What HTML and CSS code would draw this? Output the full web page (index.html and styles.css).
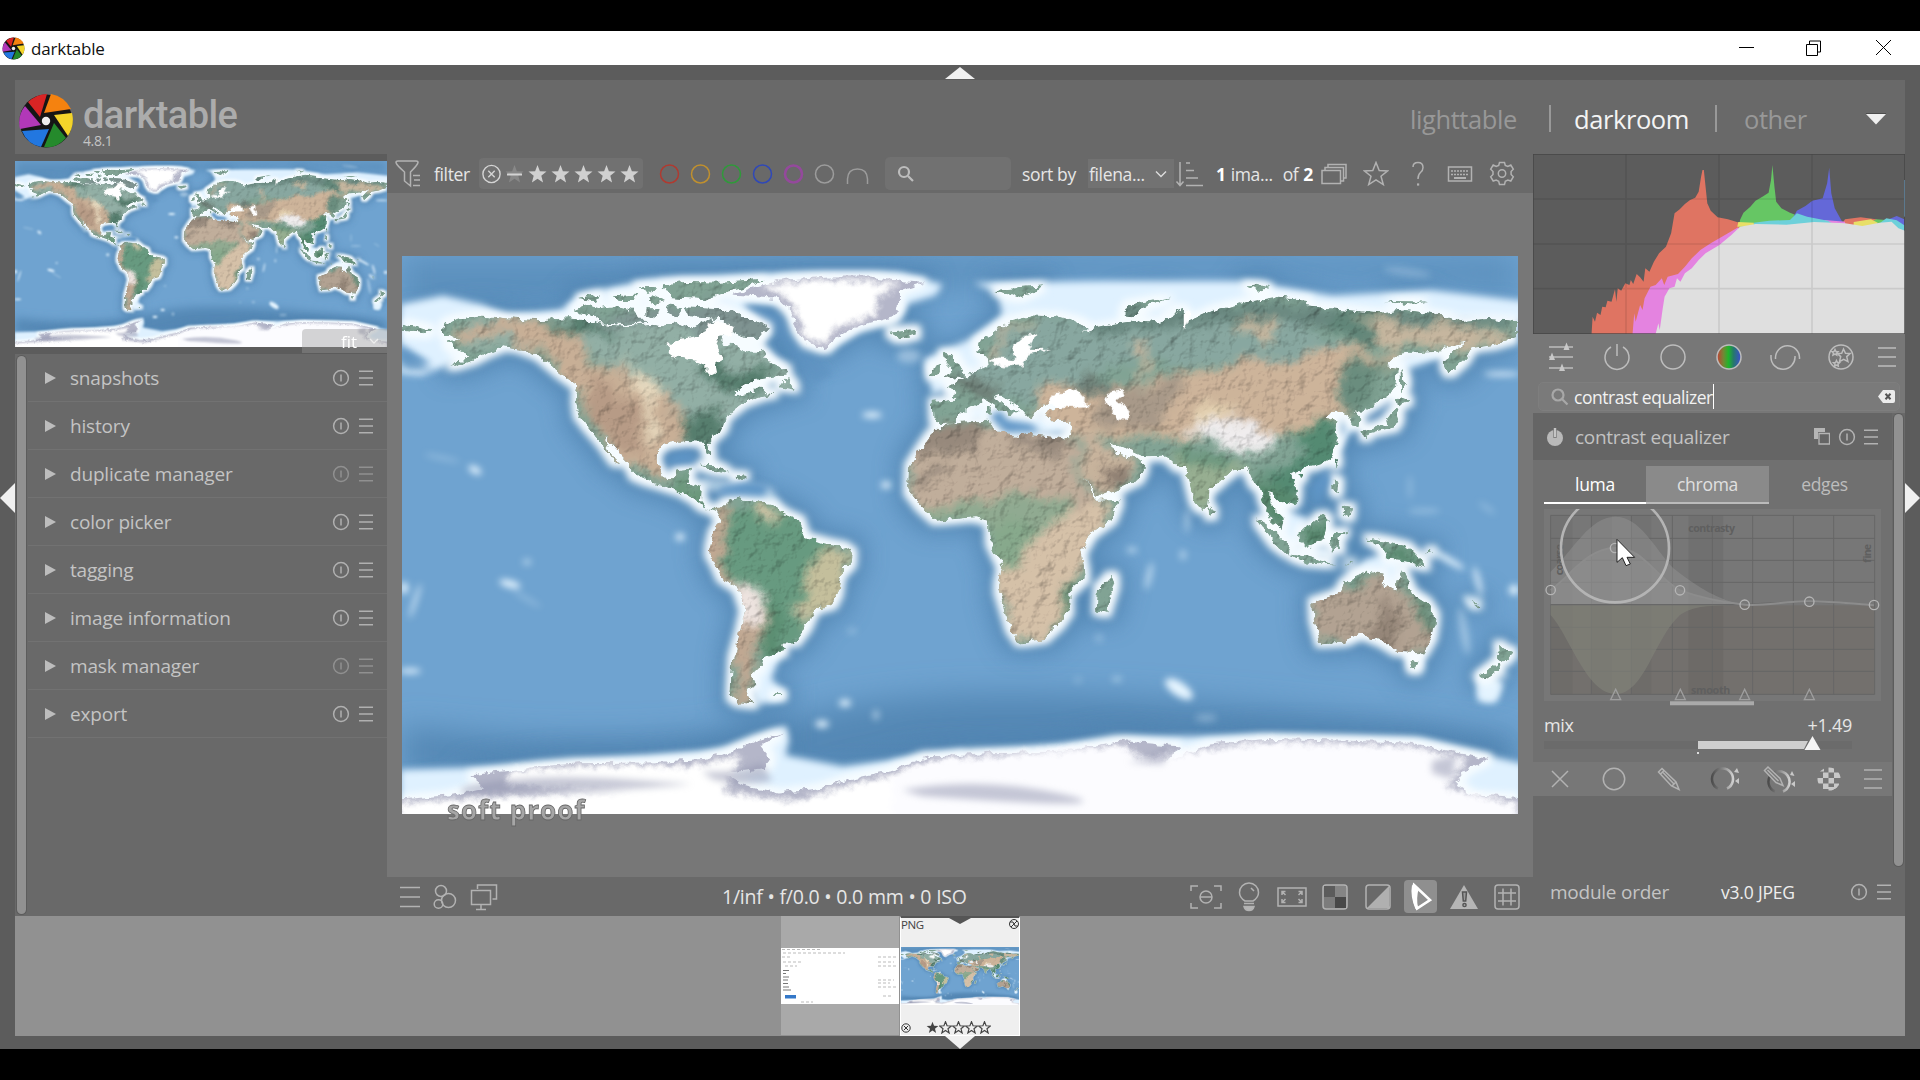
FILE: index.html
```html
<!DOCTYPE html>
<html lang="en">
<head>
<meta charset="utf-8">
<title>darktable</title>
<link rel="stylesheet" href="styles.css">
</head>
<body>
<svg class="defs" width="0" height="0" aria-hidden="true">
<defs>
  <filter id="rough" x="0" y="0" width="1116" height="558" filterUnits="userSpaceOnUse" color-interpolation-filters="sRGB">
    <feTurbulence type="fractalNoise" baseFrequency=".11" numOctaves="3" seed="4" result="n"/>
    <feDisplacementMap in="SourceGraphic" in2="n" scale="9" xChannelSelector="R" yChannelSelector="G"/>
  </filter>
  <filter id="relief" x="0" y="0" width="1116" height="558" filterUnits="userSpaceOnUse" color-interpolation-filters="sRGB">
    <feTurbulence type="fractalNoise" baseFrequency=".11" numOctaves="3" seed="4" result="n"/>
    <feDisplacementMap in="SourceGraphic" in2="n" scale="9" xChannelSelector="R" yChannelSelector="G" result="d0"/>
    <feColorMatrix in="d0" type="saturate" values=".82" result="d"/>
    <feTurbulence type="fractalNoise" baseFrequency=".07" numOctaves="5" seed="11" result="t"/>
    <feDiffuseLighting in="t" surfaceScale="2" diffuseConstant="1.22" lighting-color="#ffffff" result="l"><feDistantLight azimuth="225" elevation="55"/></feDiffuseLighting>
    <feComposite in="d" in2="l" operator="arithmetic" k1=".7" k2=".3" result="c"/>
    <feComposite in="c" in2="d" operator="in"/>
  </filter>
  <filter id="patch" x="0" y="0" width="1116" height="558" filterUnits="userSpaceOnUse" color-interpolation-filters="sRGB">
    <feTurbulence type="fractalNoise" baseFrequency=".035" numOctaves="4" seed="7" result="n"/>
    <feDisplacementMap in="SourceGraphic" in2="n" scale="34" xChannelSelector="R" yChannelSelector="G"/><feGaussianBlur stdDeviation="4.500"/>
  </filter>
  <filter id="deep" x="0" y="0" width="1116" height="558" filterUnits="userSpaceOnUse"><feMorphology operator="dilate" radius="13"/><feGaussianBlur stdDeviation="11"/></filter>
  <filter id="glow" x="0" y="0" width="1116" height="558" filterUnits="userSpaceOnUse"><feMorphology operator="dilate" radius="4.500"/><feGaussianBlur stdDeviation="3.800"/></filter>
  <filter id="b2" x="-50%" y="-50%" width="200%" height="200%"><feGaussianBlur stdDeviation="3.500"/></filter>
  <filter id="b5" x="-50%" y="-50%" width="200%" height="200%"><feGaussianBlur stdDeviation="9"/></filter>
  <filter id="b14" x="-50%" y="-50%" width="200%" height="200%"><feGaussianBlur stdDeviation="15"/></filter>
  <path id="west" transform="translate(-2 -6) scale(.3571 .3635)" d="M125 205L160 190 225 180 300 188 390 193 470 188 520 193 580 205 640 210 700 203 740 208 780 198 820 215 870 190 930 215 900 240 900 258 940 262 975 280 1000 280 1010 275 1040 310 1085 330 1080 345 1040 352 985 362 955 380 935 400 990 390 1005 375 1020 390 1050 395 1010 402 960 420 915 455 905 490 870 520 862 530 873 565 862 560 850 530 800 528 740 535 722 550 722 590 735 625 765 628 780 605 815 602 805 640 845 655 843 690 860 712 895 712 920 690 945 682 965 690 1040 698 1075 725 1120 745 1135 790 1190 805 1240 815 1268 835 1265 860 1235 890 1228 940 1210 975 1160 990 1140 1035 1105 1080 1070 1080 1075 1105 1020 1120 1010 1150 985 1165 995 1190 970 1215 990 1250 950 1245 925 1225 930 1130 950 1060 965 990 945 930 900 900 880 855 865 830 875 785 900 745 885 720 850 708 825 685 790 665 735 648 690 635 655 620 640 585 600 545 575 515 590 560 618 588 600 580 565 530 525 485 498 450 492 410 500 375 450 340 390 290 340 272 290 265 240 285 200 305 140 322 180 300 200 290 150 272 130 255 165 245 120 230ZM835 590L880 592 920 612 890 608ZM935 618L970 622 945 632ZM1065 375L1085 350 1108 382ZM5 200L85 218 70 232 5 225ZM485 165L520 150 555 160 600 155 660 170 690 200 640 205 560 198 530 175ZM500 135L560 122 540 140ZM595 125L670 120 660 140 610 140ZM665 100L720 100 700 120ZM690 160L730 160 725 185 690 178ZM735 95L800 88 900 90 1020 82 960 105 900 118 850 135 760 130ZM750 150L790 155 770 185 745 175ZM800 155L900 160 970 185 1030 215 1000 250 940 230 900 190 810 185ZM700 125L740 140 710 148ZM1370 225L1440 218 1448 232 1400 245ZM1045 1222h25v5h-25Z"/>
  <path id="east" transform="translate(498 -6) scale(.4082 .3635)" d="M80 418L135 412 138 390 115 378 135 366 160 345 192 335 215 320 212 290 190 282 188 255 230 225 265 197 330 180 380 182 430 195 460 212 440 235 410 225 440 230 480 215 530 205 600 195 640 200 660 180 690 160 702 175 700 200 770 165 840 145 920 130 1000 140 1000 155 1100 165 1180 175 1240 165 1330 180 1370 195 1440 190 1514 195 1514 240 1450 262 1400 270 1385 300 1345 340 1332 310 1360 275 1385 255 1340 265 1330 275 1230 285 1190 320 1220 325 1215 380 1180 410 1130 445 1110 440 1130 465 1128 485 1110 480 1090 445 1050 450 1045 460 1070 475 1062 500 1075 520 1060 565 1030 590 990 600 955 615 975 660 970 690 950 705 905 665 905 700 940 740 935 770 910 745 890 690 882 655 865 640 850 600 825 600 800 620 770 650 758 660 755 700 740 715 720 690 700 600 685 600 655 568 600 570 570 555 515 530 530 560 575 570 600 595 585 630 540 655 482 680 455 630 415 560 400 530 415 500 418 470 370 470 355 455 365 440 400 430 440 428 465 430 430 405 440 390 400 395 380 400 360 425 345 440 330 440 320 465 300 440 250 400 235 405 270 440 295 445 270 460 235 430 205 410 175 430 150 450 130 475 105 475 82 465ZM105 478L160 472 220 470 235 500 290 515 310 508 400 520 415 560 450 620 480 690 538 688 520 740 470 780 445 830 455 900 415 940 415 990 390 1030 350 1070 295 1080 270 1040 240 930 250 870 220 800 218 745 180 735 90 745 50 705 20 660 22 600 50 550 75 510ZM520 893L528 915 505 998 482 992 485 935ZM1010 970L1075 945 1090 915 1115 900 1145 885 1185 890 1180 915 1215 935 1230 880 1255 945 1290 970 1312 1010 1305 1060 1280 1110 1220 1105 1185 1080 1130 1055 1085 1078 1030 1082 1012 1010ZM1248 1130L1273 1135 1265 1157 1253 1150ZM1465 1083L1480 1100 1502 1105 1480 1132 1468 1125ZM1465 1133L1472 1150 1432 1182 1418 1175ZM872 738L900 757 955 815 950 835 915 805ZM950 838L1000 843 1065 865 1000 860ZM978 775L1010 755 1035 728 1050 745 1040 800 1000 817 980 803ZM1055 785L1098 772 1070 792 1082 828 1067 812 1058 832ZM1140 790L1190 800 1240 815 1262 840 1292 872 1250 858 1200 852 1175 812ZM1060 628L1077 640 1072 672 1062 655ZM1085 705L1107 710 1102 735 1085 725ZM1215 400L1250 415 1220 427ZM1218 435L1225 460 1210 488 1150 502 1140 518 1135 500 1190 475ZM1226 322L1242 365 1228 395ZM105 282L132 292 160 345 112 355 125 325 108 305ZM73 325L100 313 100 340 76 347ZM233 110L350 100 290 132ZM545 180L560 150 668 130 600 155 570 182ZM756 703L770 725 757 734ZM845 98L870 95 905 105 880 112ZM1190 140L1290 142 1250 150ZM1065 570l9 8-7 18zM975 615l15 2-10 14zM213 432h9v16h-9zM1395 960l22 15-3 3zM1105 858l-15 12 20-10zM1290 835l15-12-3 10z"/>
  <g id="ice"><path transform="translate(-2 -6) scale(.3571 .3635)" d="M930 125L1000 100 1080 82 1200 73 1310 73 1400 85 1465 90 1400 110 1400 150 1380 185 1320 200 1270 212 1215 245 1190 272 1140 255 1110 215 1095 170 1060 135 1000 130ZM0 1512L140 1500 240 1478 200 1445 400 1420 500 1412 700 1410 850 1400 930 1380 1000 1350 1070 1328 1010 1365 1040 1400 1020 1425 900 1440 960 1470 1060 1495 1180 1480 1260 1455 1380 1430 1480 1392 1580 1395V1590H0Z"/><path transform="translate(498 -6) scale(.4082 .3635)" d="M-20 1435L60 1395 200 1385 400 1380 540 1350 680 1365 650 1410 760 1360 900 1345 1100 1350 1250 1355 1440 1400 1385 1430 1360 1470 1400 1500 1530 1508V1590H-20Z"/></g>
  <g id="shelf"><path transform="translate(-2 -6) scale(.3571 .3635)" d="M0 150L120 125 230 150 300 180 450 165 500 125 700 80 1100 62 1400 62 1520 95 1500 125 1420 150 1400 190 1300 215 1190 280 1120 250 1080 150 960 145 1040 220 1000 260 1080 320 960 400 880 300 600 220 150 250 180 300 60 345 0 340 0 310 90 315 0 260ZM980 1190L1000 1120 1080 1080 1040 1180 1080 1215 1070 1240 1000 1250ZM0 1430L300 1420 900 1375 1080 1310 1090 1350 1080 1390 1240 1420 1400 1400 1580 1375V1560H0Z"/><path transform="translate(498 -6) scale(.4082 .3635)" d="M180 90L500 85 850 85 1060 125 1300 110 1530 140V200L900 170 600 230 200 330 80 400 60 300 180 240 250 180 240 120ZM1190 320L1230 290 1360 260 1340 290 1240 330 1240 380ZM1040 440L1130 460 1080 540 1060 590 1045 550ZM900 670L960 720 1000 740 970 830 930 800ZM950 820L1050 820 1060 850 960 840ZM1090 900L1140 850 1200 830 1230 860 1230 910 1200 930ZM1230 1090h50v60h-30zM100 475L220 470 290 510 410 500 415 465 300 445 190 420ZM60 310h120v80h-60zM1420 1170L1480 1190 1460 1245 1415 1240ZM-20 1400L300 1370 560 1340 900 1335 1280 1345 1440 1390 1530 1415V1560H-20Z"/></g>
  <clipPath id="landclip"><use href="#west"/><use href="#east"/></clipPath>
  <symbol id="world" viewBox="0 0 1116 558" preserveAspectRatio="none">
    <rect width="1116" height="558" fill="#6fa3d0"/>
    <path d="M0 0H1116V40Q900 10 560 30T0 60Z" fill="#5c90bd" filter="url(#b14)"/>
    <path d="M0 470Q250 500 420 455T1116 480V520H0Z" fill="#5588b5" filter="url(#b14)"/>
    <g filter="url(#deep)" fill="#5083b0" opacity=".78"><use href="#west"/><use href="#east"/><use href="#ice"/></g>
    <g fill="#dff1ff" filter="url(#b2)"><use href="#shelf"/></g>
    <g fill="#e6f5ff" filter="url(#b2)">
      <ellipse cx="73" cy="214" rx="7" ry="3.500" transform="rotate(30 73 214)"/><ellipse cx="40" cy="202" rx="18" ry="1.500" opacity=".4" transform="rotate(12 40 202)"/>
      <ellipse cx="278" cy="281" rx="4.500" ry="3.500"/><ellipse cx="108" cy="328" rx="11" ry="3.500" transform="rotate(15 108 328)"/><ellipse cx="125" cy="343" rx="16" ry="2" opacity=".3" transform="rotate(30 125 343)"/>
      <ellipse cx="13" cy="345" rx="2" ry="18" opacity=".8" transform="rotate(18 13 345)"/><ellipse cx="2" cy="332" rx="4" ry="6"/><ellipse cx="8" cy="415" rx="11" ry="2.500"/><ellipse cx="125" cy="306" rx="4" ry="3" opacity=".6"/>
      <ellipse cx="470" cy="159" rx="10" ry="3"/><ellipse cx="484" cy="229" rx="5" ry="3.500"/><ellipse cx="507" cy="100" rx="12" ry="7" opacity=".4"/>
      <ellipse cx="443" cy="447" rx="6" ry="3.500"/><ellipse cx="420" cy="468" rx="7" ry="3.500"/><ellipse cx="474" cy="459" rx="3" ry="5" opacity=".6"/><ellipse cx="450" cy="375" rx="5" ry="3" opacity=".3"/>
      <ellipse cx="777" cy="433" rx="16" ry="7" transform="rotate(34 777 433)"/><ellipse cx="804" cy="462" rx="11" ry="4" opacity=".3"/><ellipse cx="715" cy="423" rx="5" ry="2.500" opacity=".5"/><ellipse cx="676" cy="424" rx="4" ry="2.500" opacity=".3"/>
      <ellipse cx="730" cy="294" rx="5" ry="2.500" opacity=".7"/><ellipse cx="747" cy="320" rx="3" ry="14" opacity=".6" transform="rotate(12 747 320)"/><ellipse cx="785" cy="265" rx="2" ry="12" opacity=".6"/><ellipse cx="781" cy="299" rx="3" ry="5" opacity=".6"/><ellipse cx="697" cy="382" rx="4" ry="4" opacity=".3"/>
      <ellipse cx="1008" cy="231" rx="2" ry="12" opacity=".3"/><ellipse cx="1022" cy="255" rx="16" ry="2" opacity=".4"/><ellipse cx="1085" cy="252" rx="10" ry="2" opacity=".3" transform="rotate(35 1085 252)"/>
      <ellipse cx="1045" cy="303" rx="20" ry="3" transform="rotate(30 1045 303)"/><ellipse cx="1076" cy="325" rx="3" ry="15" opacity=".8" transform="rotate(-15 1076 325)"/><ellipse cx="1068" cy="346" rx="9" ry="2.500" transform="rotate(40 1068 346)"/><ellipse cx="1062" cy="375" rx="4" ry="24" opacity=".4" transform="rotate(-10 1062 375)"/>
      <ellipse cx="1112" cy="334" rx="5" ry="5"/><ellipse cx="1086" cy="433" rx="11" ry="13" opacity=".8"/><ellipse cx="1100" cy="118" rx="18" ry="2"/><ellipse cx="1005" cy="16" rx="24" ry="4" opacity=".25" transform="rotate(8 1005 16)"/><ellipse cx="1088" cy="420" rx="20" ry="5" opacity=".4"/>
      <path d="M300 222l40 4 30 6 8 18-22 0-20-12-36-4z" opacity=".6"/>
    </g>
    <path d="M8 98q-4 8 28 18l-34-2zM0 92l26 16-26 4zM342 50q18-6 40 12l10 22q20 12 40 34l-20 10-36-50zM930 160q25-12 14 12t-22-2z" fill="#5f93c1" filter="url(#b2)" opacity=".8"/>
    <g filter="url(#glow)" fill="#f6fcff"><use href="#west"/><use href="#east"/><use href="#ice"/></g>
    <path d="M262 206q10-12 28-10l4 10-22 2zM318 232q30-10 48-2l-4 10-46-2zM587 160l12-6 6 10 25 4 8 8-34 0zM910 230l14-16 5 10-15 26z" fill="#5f95c6" filter="url(#b2)"/>
    <g filter="url(#relief)">
      <g clip-path="url(#landclip)">
        <rect width="1116" height="558" fill="#7fa897"/>
        <g filter="url(#patch)">
          <rect width="1116" height="558" fill="#7ba593"/>
          <path d="M60 60L330 55 420 110 330 190 250 200 240 130 170 90 60 95Z" fill="#8db0a4"/>
          <path d="M245 165L325 145 310 190 250 200ZM130 65l60-4 40 16-80-2zM320 128l60-20-20 20-30 12zM290 95l60 25-40 8z" fill="#4f7f6c"/>
          <path d="M180 60L420 40 390 90 300 80Z" fill="#7b9492"/>
          <path d="M60 66l80-2 38 15 8 28 40 10 42 18 15 28-10 60-45-10-60-80-20-35-50-18-50 8z" fill="#cdae90"/>
          <path d="M225 105l30 25 3 40-6 40-10-60z" fill="#ead9b8"/>
          <path d="M180 118l40 22 20 20-5 40-50-40z" fill="#bc9a80"/>
          <path d="M290 220h30v30h-50z" fill="#649a78"/>
          <path d="M315 250l70 0 40 40 20 10 5 30-60 60-55-30-25-60z" fill="#5f9d7d"/>
          <path d="M395 320l30-22 25-5-4 55-40 14z" fill="#c5bf95"/>
          <path d="M355 255h22l-5 12-12 4zM395 355h18v14h-14z" fill="#d6c5a0"/>
          <path d="M375 330l10 70-30 5 5-50z" fill="#52906e"/>
          <path d="M320 247l16 0-16 40-4 25 36 20 10 30-11 40-2 40-21 10 5-100-40-55z" fill="#c4a78d"/>
          <path d="M330 322l28 12-4 35-14-3z" fill="#efe3de"/>
          <path d="M550 130L600 70 720 60 900 60 960 100 700 110 650 150Z" fill="#83a9a0"/>
          <path d="M680 50L1000 50 1116 60 1060 75 900 65 700 75Z" fill="#64897f"/>
          <path d="M575 100l40-30 25-6-16 10-40 24zM738 84l8 0-2 40-6-4z" fill="#c9b498"/>
          <path d="M930 52l50 0 0 30-20 20-30-40z" fill="#5b8878"/>
          <path d="M835 65l40-4-5 25-35-10zM955 66l160 4-50 26-80-4z" fill="#c9b699"/>
          <path d="M650 125h90l120-22 100-12 40 10-50 60-60 20-80 5-130-5-60-20z" fill="#d2b394"/>
          <path d="M695 135l90-15-30 55-60-5z" fill="#ab9985"/>
          <path d="M690 112l22 16-18 14-20-8zM540 120l60 0-10 20-40-5z" fill="#6b7f75"/>
          <path d="M920 160l20 35-15 30-50 15-10-25 40-20-20-20z" fill="#4b8d70"/>
          <path d="M945 105l45 0-25 45-35 0z" fill="#648f7d"/>
          <path d="M500 170l160 0 30 85-60 5-125-10z" fill="#c4ad96"/>
          <path d="M500 172l90-6-10 26-70 10zM605 178l60 0-10 26zM508 220l40-6-25 20z" fill="#998979"/>
          <path d="M505 252l80-12 80 0 10 25-30 5-150 0z" fill="#8cac8d"/>
          <path d="M590 270h50v36l-26 14-24-14z" fill="#82ab88"/>
          <path d="M595 312l50-42 30-20 35 5-30 60-35 75-40-5z" fill="#d9c0a2"/>
          <path d="M662 330l22-14-5 30-15 36-8-10z" fill="#659375"/>
          <path d="M668 172l60 30 15 15-50 28z" fill="#cbb297"/>
          <path d="M700 205l35 10-10 15-25-4zM770 190l12 18-10-2z" fill="#917e6e"/>
          <path d="M770 195l80 20-20 10-30 40-20-30z" fill="#93b08c"/>
          <path d="M850 215l50 35-20 30-20-20zM965 285l60 20-50 5zM890 270l50-10-30 40zM860 280l40 30-20 4z" fill="#4f8c6b"/>
          <path d="M775 190l60 16-8 8-50-12z" fill="#64987a"/>
          <path d="M790 168l60 0 30 14-10 12-30 3-40-12z" fill="#f0edee"/>
          <path d="M795 152h45l-20 12-25 4z" fill="#e8d2aa"/>
          <path d="M905 330l90-10 40 60-30 30-90-25z" fill="#b5a28e"/>
          <path d="M980 345l20 15-15 40-20-10z" fill="#978574"/>
          <path d="M940 315l30 0-10 8zM1005 310l14 20 16 40-6 15-14-40z" fill="#648d75"/>
        </g>
      </g>
    </g>
    <g filter="url(#rough)">
      <use href="#ice" fill="#b4b6c9"/>
      <path transform="translate(-2 -6) scale(.3571 .3635)" d="M1010 96L1180 80 1400 90 1340 130 1330 180 1220 215 1190 258 1140 250 1120 195 1080 130ZM310 1430L600 1415 800 1420 960 1390 900 1500 300 1475ZM0 1520L250 1505 500 1490 900 1490 1100 1515 1300 1460 1568 1400V1590H0Z" fill="#fff" filter="url(#b5)"/>
      <path transform="translate(498 -6) scale(.4082 .3635)" d="M-20 1450L60 1405 540 1360 600 1400 760 1370 900 1350 1250 1362 1390 1400 1340 1480 1514 1522V1590H-20Z" fill="#fcfcff" filter="url(#b5)"/>
      <path transform="translate(-2 -6) scale(.3571 .3635)" d="M750 262L780 245 830 238 855 225 870 200 895 195 935 212 925 235 895 235 880 255 895 280 905 300 880 315 885 340 870 347 855 330 855 315 810 305 770 295 750 280Z" fill="#fff"/>
      <path transform="translate(498 -6) scale(.4082 .3635)" d="M510 393L545 385 550 400 530 415 560 440 555 470 530 465 520 440 505 415ZM215 305L240 295 285 300 275 265 300 240 335 228 320 260 315 272 370 272 310 292 300 318 250 320ZM362 425L375 395 435 383 440 400 465 430 400 432ZM695 170h10l5 30-15 20z" fill="#fff"/>
    </g>
    <path d="M60 532q60-16 170-8l60 4q-80 8-230 10zM300 515q30 4 60-8l10 18q-30 6-60-2zM500 534q80-14 160 4t-140 2zM725 506q20-2 42-16l-6 18zM1030 505l24-6-4 24-20-6z" fill="#8d91ac" opacity=".5" filter="url(#b2)"/>
  </symbol>
  <symbol id="reset" viewBox="0 0 18 18"><circle cx="9" cy="9" r="7.400"/><path d="M9 5.500v7"/></symbol>
  <symbol id="menu" viewBox="0 0 14 16"><path d="M0 1.200h14M0 8h14M0 14.800h14"/></symbol>
  <symbol id="star" viewBox="0 0 20 20"><path d="M10 1l2.400 6.300 6.600.3-5.200 4.200 1.800 6.600L10 14.700l-5.600 3.700 1.800-6.600L1 7.600l6.600-.3z"/></symbol>
  <symbol id="logo" viewBox="0 0 56 56">
    <circle cx="28" cy="28" r="26.500" fill="#151515"/>
    <path d="M10 9Q19 1 29 1L22 24Z" fill="#d92424"/><path d="M33 1Q46 3 53 16L26 20Z" fill="#f5820f"/><path d="M36 22L54 20Q57 32 50 43Z" fill="#f3d42a"/><path d="M36 30L48 45Q38 56 26 54Z" fill="#258a2c"/><path d="M31 36L23 54Q9 51 4 38Z" fill="#2277e0"/><path d="M7 13L23 32 2 36Q-1 23 7 13Z" fill="#b238b8"/>
    <circle cx="28" cy="28" r="4.200" fill="#eee"/>
  </symbol>
</defs>
</svg>

<header class="titlebar">
  <svg class="tlogo" width="23" height="23"><use href="#logo"/></svg>
  <span class="tname">darktable</span>
  <svg class="winbtns" width="170" height="34" fill="none" stroke="#000" stroke-width="1"><path d="M0 16.500h15M67.500 13.500h11v11h-11zM70.500 13v-3h11v11h-3M137 9l15 15M152 9l-15 15"/></svg>
</header>

<div class="app">
  <div class="edge-top"><svg width="30" height="12"><path d="M15 0L30 12H0z" fill="#f0f0f0"/></svg></div>
  <div class="edge-side"><svg width="15" height="30"><path d="M15 0V30L0 15z" fill="#f0f0f0"/></svg></div>

  <div class="body">
    <div class="banner">
      <svg class="biglogo" width="56" height="56"><use href="#logo"/></svg>
      <div class="brand"><div class="bname">darktable</div><div class="bver">4.8.1</div></div>
      <nav class="modes"><span>lighttable</span><i></i><span class="on">darkroom</span><i></i><span>other</span><svg width="20" height="12"><path d="M0 1H20L10 11.500z" fill="#f0f0f0"/><path d="M0 .5h20" stroke="#4c4c4c"/></svg></nav>
    </div>

    <div class="main">
      <aside class="left">
        <div class="nav"><svg width="372" height="186"><use href="#world"/></svg><div class="fit"><span>fit</span><svg width="10" height="8" fill="none" stroke="#eee" stroke-width="1.300"><path d="M1 2l4 4 4-4"/></svg></div></div>
        <div class="lpanel">
          <div class="lscroll"></div>
          <div class="mods">
            <div class="mod"><b></b><span>snapshots</span><svg width="18" height="18"><use href="#reset"/></svg><svg width="14" height="16"><use href="#menu"/></svg></div>
            <div class="mod"><b></b><span>history</span><svg width="18" height="18"><use href="#reset"/></svg><svg width="14" height="16"><use href="#menu"/></svg></div>
            <div class="mod dim"><b></b><span>duplicate manager</span><svg width="18" height="18"><use href="#reset"/></svg><svg width="14" height="16"><use href="#menu"/></svg></div>
            <div class="mod"><b></b><span>color picker</span><svg width="18" height="18"><use href="#reset"/></svg><svg width="14" height="16"><use href="#menu"/></svg></div>
            <div class="mod"><b></b><span>tagging</span><svg width="18" height="18"><use href="#reset"/></svg><svg width="14" height="16"><use href="#menu"/></svg></div>
            <div class="mod"><b></b><span>image information</span><svg width="18" height="18"><use href="#reset"/></svg><svg width="14" height="16"><use href="#menu"/></svg></div>
            <div class="mod dim"><b></b><span>mask manager</span><svg width="18" height="18"><use href="#reset"/></svg><svg width="14" height="16"><use href="#menu"/></svg></div>
            <div class="mod"><b></b><span>export</span><svg width="18" height="18"><use href="#reset"/></svg><svg width="14" height="16"><use href="#menu"/></svg></div>
          </div>
        </div>
      </aside>

      <section class="center">
        <div class="toolbar">
          <div class="cell ficon"><svg class="ic" width="26" height="28"><path d="M1 2.500Q1 1 3 1H21Q23 1 23 2.500Q22.500 5 15.500 12V26L9.500 21V12Q1.500 5 1 2.500zM18 15.500h7M19 20h6M18 25.500h7"/></svg></div>
          <div class="cell ftext">filter</div>
          <div class="rating">
            <svg width="23" height="20" fill="none" stroke="#d4d4d4" stroke-width="1.400"><circle cx="11.500" cy="10" r="8.600"/><path d="M8.300 6.800l6.400 6.400M14.700 6.800l-6.400 6.400"/></svg>
            <svg width="23" height="20"><use href="#star" x="1.500" width="20" height="20" fill="#888"/><path d="M4 10.500h15" stroke="#d4d4d4" stroke-width="2"/></svg>
            <svg width="23" height="20"><use href="#star" x="1.500" width="20" height="20" fill="#d0d0d0"/></svg><svg width="23" height="20"><use href="#star" x="1.500" width="20" height="20" fill="#d0d0d0"/></svg><svg width="23" height="20"><use href="#star" x="1.500" width="20" height="20" fill="#d0d0d0"/></svg><svg width="23" height="20"><use href="#star" x="1.500" width="20" height="20" fill="#d0d0d0"/></svg><svg width="23" height="20"><use href="#star" x="1.500" width="20" height="20" fill="#d0d0d0"/></svg>
          </div>
          <div class="colors">
            <svg width="31" height="22"><circle cx="15.500" cy="11" r="9" stroke="#b03a30"/></svg><svg width="31" height="22"><circle cx="15.500" cy="11" r="9" stroke="#c0902e"/></svg><svg width="31" height="22"><circle cx="15.500" cy="11" r="9" stroke="#2f9a3a"/></svg><svg width="31" height="22"><circle cx="15.500" cy="11" r="9" stroke="#2f48b8"/></svg><svg width="31" height="22"><circle cx="15.500" cy="11" r="8.500" stroke="#94499c" stroke-width="2.600"/></svg><svg width="31" height="22"><circle cx="15.500" cy="11" r="9" stroke="#9c9c9c"/></svg><svg width="31" height="22"><path d="M7.500 21V16Q8 6 17.500 6T27.500 16V21" stroke="#9c9c9c"/></svg>
          </div>
          <div class="tsearch"><svg width="18" height="18" fill="none" stroke="#bdbdbd" stroke-width="2.200"><circle cx="7" cy="7" r="5"/><path d="M11 11l5 5"/></svg></div>
          <div class="cell sortby">sort by</div>
          <div class="combo"><span>filena...</span><svg width="12" height="8" fill="none" stroke="#ddd" stroke-width="1.400"><path d="M1 1.500l5 5 5-5"/></svg></div>
          <div class="cell sorticon"><svg class="ic" width="28" height="26"><path d="M5 1v23M1.500 20.500L5 24.500 8.500 20.500M11 2h4M11 9.500h8M11 17h12M11 24.500h17"/></svg></div>
          <div class="cell count"><b>1</b><span class="ima">ima...</span><span class="of">of</span><b>2</b></div>
          <div class="tools ic">
            <svg width="26" height="22"><path d="M1 7.500h18.500v13H1zM4 7V4.500h18.500V18H20M7 4V1.500h18V15h-2"/></svg>
            <svg width="26" height="26"><path d="M13 1.500l3.200 8 8.500.4-6.700 5.300 2.300 8.400-7.300-4.800-7.300 4.800 2.300-8.400L1.300 9.900l8.500-.4z"/></svg>
            <svg width="14" height="26"><path d="M2 6Q2 1.500 7 1.500T12 6.500Q12 9.500 9.500 11.500T7 18"/><path d="M6 23.500h2.200" stroke-width="2.200"/></svg>
            <svg width="26" height="18"><path d="M1.500 2h23v14h-23z"/><path d="M4 6h18M4 9.500h18" stroke-dasharray="2 1"/><path d="M7 13h12" stroke-width="2"/></svg>
            <svg width="26" height="26"><path d="M10.500 1.500h5l.8 3 2.500 1 3-1.500 2.500 4.200-2.200 2.300v3l2.200 2.300-2.500 4.200-3-1-2.500 1.200-.8 3.300h-5l-.8-3.300-2.500-1.200-3 1-2.500-4.200L4 13.500v-3L1.700 8.200 4.200 4l3 1.500 2.500-1z"/><circle cx="13" cy="12.500" r="3.700"/></svg>
          </div>
        </div>

        <div class="canvas"><svg width="1116" height="558"><use href="#world"/></svg><div class="proof">soft proof</div></div>

        <div class="bottombar">
          <div class="bleft ic">
            <svg width="20" height="22"><path d="M0 1.500h20M0 11h20M0 20.500h20"/></svg>
            <svg width="24" height="26"><circle cx="8" cy="7" r="5.500"/><circle cx="15.500" cy="16.500" r="7"/><circle cx="5.500" cy="20" r="4.300"/></svg>
            <svg width="28" height="28"><path d="M1.500 7.500h19v14h-19zM7.500 6V2h19v14h-4M11 22v4M6 26.500h10"/></svg>
          </div>
          <div class="exif">1/inf • f/0.0 • 0.0 mm • 0 ISO</div>
          <div class="bright ic">
            <svg width="32" height="26"><path d="M1 7V2h7M24 2h7v5M31 19v5h-7M8 24H1v-5"/><circle cx="16" cy="13" r="6"/><path d="M10 13h12"/></svg>
            <svg width="22" height="30"><path d="M7 19Q1.500 15.500 1.500 10.500A9.500 9.500 0 0 1 20.500 10.500Q20.500 15.500 15 19zM6 21.500h10M13 6l3 3"/><path d="M6 24.500h10q-1 4-5 4t-5-4z" fill="#b5b5b5"/></svg>
            <svg width="30" height="20"><path d="M1 1h28v18H1zM5 8V4.500h3.500M5 4.500l3.500 3.500M25 8V4.500h-3.500M25 4.500L21.500 8M5 12v3.500h3.500M5 15.500L8.500 12M25 12v3.500h-3.500M25 15.500L21.500 12"/></svg>
            <svg width="26" height="26"><rect x="1" y="1" width="24" height="24" rx="3" fill="#7c7c7c"/><path d="M2 2h11v11H2z" fill="#5c5c5c" stroke="none"/><path d="M13 2h11v11H13z" fill="#858585" stroke="none"/><path d="M13 13h11v11H13z" fill="#484848" stroke="none"/></svg>
            <svg width="26" height="26"><path d="M24 2V24H2z" fill="#b0b0b0" stroke="none"/><rect x="1" y="1" width="24" height="24" rx="3"/></svg>
            <svg class="act" width="33" height="33"><path d="M10 5L26 20 13 28.500Q8 16 10 5z" fill="none" stroke="#fff" stroke-width="2.600"/><path d="M8 5Q6 16 11.500 29L14 28Q12 17 15 8z" fill="#fff" stroke="none"/></svg>
            <svg width="28" height="26"><path d="M14 1L28 25H0z" fill="#b5b5b5" stroke="none"/><path d="M12.500 8h4l-.8 9h-2.400z" fill="#999" stroke="#555"/><circle cx="14.500" cy="21" r="1.600" stroke="#555"/></svg>
            <svg width="26" height="26"><rect x="1" y="1" width="24" height="24" rx="3"/><path d="M9 4.500v17M17 4.500v17M4 9h18M4 17h18"/></svg>
          </div>
        </div>
      </section>

      <aside class="right">
        <svg class="histo" width="372" height="180" viewBox="444 402 1080 540" preserveAspectRatio="none">
          <rect x="444" y="402" width="1080" height="540" fill="#5c5c5c"/>
          <path fill="#df7462" d="M614 942L617 890 624 905 630 878 640 885 645 860 655 862 660 842 672 845 682 808 686 845 690 805 700 812 712 790 724 795 728 780 735 792 745 762 755 772 765 785 770 745 782 755 795 725 810 700 830 680 845 640 855 580 870 568 885 552 900 540 915 533 925 515 932 470 936 450 940 450 945 500 950 550 960 572 980 592 1010 598 1043 608V942Z"/>
          <path fill="#df7462" d="M1340 612L1350 598 1395 592 1440 598 1460 615V650H1340Z"/>
          <path fill="#66c664" d="M1040 640L1045 600 1055 578 1075 560 1090 542 1110 530 1128 518 1135 480 1139 435 1145 500 1150 545 1165 565 1190 578 1220 590 1280 600 1300 605V650ZM1420 610l20-12 30 2v20h-50z"/>
          <path fill="#6468d8" d="M1195 600L1210 572 1235 558 1255 542 1285 535 1298 490 1304 443 1310 520 1320 565 1340 602 1350 610H1195ZM1480 596l20-8 22 10v30h-42z"/>
          <path fill="#e483e0" d="M733 942L738 880 742 905 755 855 762 870 768 835 785 800 800 795 818 775 825 795 835 770 865 762 885 740 905 715 930 690 960 670 985 655 1010 640 1040 622V690L820 942ZM1290 600l60 5v15h-70z"/>
          <path fill="#6dd0da" d="M1085 608L1130 602 1190 600 1210 580 1240 590 1300 602 1320 615H1085ZM1450 610l20-15 30 6 22 15v20z"/>
          <path fill="#e8df67" d="M1040 606l45 2v12h-48zM1375 606l50-8 20 10-10 12h-60z"/>
          <path fill="#dfdfdf" d="M800 942L808 910 812 930 820 870 826 830 840 805 855 800 862 775 872 785 885 760 905 745 925 720 945 700 985 675 1020 645 1045 620 1090 612 1180 614 1260 606 1350 610 1400 618 1450 608 1485 605 1505 625 1524 632V942Z"/>
          <path d="M714 402V942M984 402V942M1254 402V942M444 537H1524M444 672H1524M444 806H1524" stroke="#000" stroke-opacity=".09" stroke-width="5" fill="none"/>
          <rect x="445" y="403" width="1078" height="538" fill="none" stroke="#444" stroke-width="2"/><path d="M1523 480V590" stroke="#6a9cc0" stroke-width="2"/>
        </svg>
        <div class="groups ic">
          <svg width="26" height="30"><path d="M1 5h24M1 15h24M1 26h24"/><path d="M15.500 8l3-7.500 3 7.500zM1 18l3-7.500L7 18zM11 29l3-7.500 3 7.500z" fill="#c8c8c8" stroke="none"/></svg>
          <svg width="28" height="28"><path d="M8 4A12 12 0 1 0 20 4M14 1v12"/></svg>
          <svg width="28" height="28"><circle cx="14" cy="14" r="12"/></svg>
          <svg width="28" height="28"><defs><linearGradient id="rgb"><stop offset="0" stop-color="#c33f36"/><stop offset=".28" stop-color="#6e8a34"/><stop offset=".48" stop-color="#1fb52b"/><stop offset=".68" stop-color="#257a68"/><stop offset="1" stop-color="#3c4bd0"/></linearGradient></defs><circle cx="14" cy="14" r="12" fill="url(#rgb)"/></svg>
          <svg width="32" height="30"><path d="M6.500 16A12 12 0 0 1 30.500 15.500M26 15A12 12 0 0 1 2 15.500M6.500 16v1M2 13v3M30.500 15v2M26 14v2"/></svg>
          <svg width="28" height="28"><circle cx="14" cy="14" r="12"/><path d="M16.500 6l2 4.200 4.700.2-3.500 3.200 1.200 5-4.200-2.300-4.200 2.300 1.200-5-3.500-3.200 4.500-.2z"/><path d="M8 6.500l1 2 2 .2-1.500 1.500.3 2L8 11.200 6 12.200l.5-2L5 8.700l2-.2zM9.500 17.500l1 2 2 .2-1.500 1.500.3 2-1.800-1-1.800 1 .3-2-1.500-1.500 2-.2z"/></svg>
          <svg width="18" height="20"><path d="M0 1h18M0 10h18M0 19h18"/></svg>
        </div>
        <div class="search"><svg width="18" height="18" fill="none" stroke="#a8a8a8" stroke-width="2.200"><circle cx="7" cy="7" r="5.500"/><path d="M11 11l5.500 5.500"/></svg><span>contrast equalizer</span><i></i><svg class="clr" width="17" height="13"><path d="M5 0H15Q17 0 17 2V11Q17 13 15 13H5L0 6.500z" fill="#ececec"/><path d="M7.500 3.800l5 5.400M12.500 3.800l-5 5.400" stroke="#555" stroke-width="2"/></svg></div>
        <div class="rpanel">
          <div class="rstack">
            <div class="rhead"><svg width="18" height="20"><circle cx="9" cy="11" r="8" fill="#b9b9b9"/><path d="M9 1v10" stroke="#808080" stroke-width="3.500"/><path d="M9 1v9" stroke="#ddd" stroke-width="1.500"/></svg><span>contrast equalizer</span>
              <svg width="16" height="17"><path d="M0 0h11v4H4v7H0z" fill="#b5b5b5"/><path d="M5 5.500h10.500v10.500H5z" fill="none" stroke="#b5b5b5" stroke-width="1.300"/></svg><svg class="ic" width="18" height="18"><use href="#reset"/></svg><svg class="ic" width="14" height="16"><use href="#menu"/></svg></div>
            <div class="tabs"><span class="sel">luma</span><span class="hov">chroma</span><span>edges</span></div>
            <div class="graph">
              <svg width="337" height="197" viewBox="72 27 1011 591">
                <defs><clipPath id="gc"><rect x="72" y="27" width="1011" height="576"/></clipPath></defs>
                <rect x="72" y="27" width="1011" height="576" fill="#777"/>
                <rect x="92" y="316" width="972" height="268" fill="#73706d"/>
                <path d="M92 46h66v538H92zM214 46h62v538h-62zM334 46h60v538h-60z" fill="#000" opacity=".035"/><path d="M505 46h105v538H505z" fill="#000" opacity=".05"/>
                <path d="M92 46H1064V583H92zM214 46V583M334 46V583M457 46V583M577 46V583M698 46V583M820 46V583M941 46V583M92 115H1064M92 181H1064M92 247H1064M92 382H1064M92 448H1064M92 514H1064" fill="none" stroke="#666" stroke-width="3"/>
                <path d="M92 215C160 150 210 50 285 50S400 140 460 205C530 260 600 305 674 314H92Z" fill="#9a9a9a" opacity=".38"/>
                <path d="M92 270C150 230 200 145 285 144S400 225 480 271C560 300 620 308 674 314H92Z" fill="#9c9c9c" opacity=".3"/>
                <path d="M92 345C150 410 200 582 287 582S400 420 480 345C520 318 560 316 674 314H92Z" fill="#828379" opacity=".6"/>
                <path d="M92 314H674Q860 298 1062 316" fill="none" stroke="#686868" stroke-width="4"/>
                <path d="M92 270C150 230 200 145 285 144S400 225 480 271C560 300 620 308 674 314S800 303 868 304 1000 310 1062 316" fill="none" stroke="#8c8c8c" stroke-width="6"/>
                <g class="gtxt"><text x="505" y="96" textLength="140">contrasty</text><text x="513" y="582" textLength="118">smooth</text><text transform="translate(130 226) rotate(-90)" textLength="94">coarse</text><text transform="translate(1053 191) rotate(-90)" textLength="56">fine</text></g>
                <g fill="none" stroke="#b5b5b5" stroke-width="4"><circle cx="92" cy="270" r="14"/><circle cx="285" cy="144" r="14"/><circle cx="480" cy="271" r="14"/><circle cx="674" cy="314" r="14"/><circle cx="868" cy="305" r="14"/><circle cx="1062" cy="315" r="14"/></g>
                <g fill="none" stroke="#9e9e9e" stroke-width="4"><path d="M287 568l15 31h-30zM481 568l15 31h-30zM674 568l15 31h-30zM868 568l15 31h-30z"/></g>
                <circle cx="285" cy="145" r="162" fill="none" stroke="#b4b4b4" stroke-width="8" clip-path="url(#gc)"/>
                <path d="M450 604h252v12H450z" fill="#aaa"/>
                <path d="M291 118V187L307 173 318 197 331 192 321 172H344Z" fill="#fff" stroke="#222" stroke-width="3"/>
              </svg>
            </div>
            <div class="mix"><span>mix</span><span>+1.49</span></div>
            <svg class="slider" width="308" height="18"><path d="M0 5h308v8H0z" fill="#6b6b6b"/><path d="M154 5h110l-4 8H154z" fill="#cfcfcf"/><path d="M268.500 0l8 14h-16z" fill="#f5f5f5"/><path d="M153 16h2v2h-2z" fill="#ddd"/></svg>
            <div class="blend ic">
              <svg width="18" height="18"><path d="M1 1l16 16M17 1L1 17"/></svg>
              <svg width="24" height="24"><circle cx="12" cy="12" r="10.700"/></svg>
              <svg width="24" height="24"><path d="M1.500 5L5 1.500 19 15 22 22.500 14.500 19zM5 4.500l12 12.500M3.500 7L7 3.500M15 19l4-4"/></svg>
              <svg width="32" height="24"><defs><linearGradient id="ring"><stop offset="0" stop-color="#4d4d4d"/><stop offset=".5" stop-color="#858585"/><stop offset="1" stop-color="#d0d0d0"/></linearGradient></defs><path d="M9 21.500A10.500 10.500 0 1 1 18 21.500" stroke="url(#ring)" stroke-width="2.600"/><path d="M25 5l3-4 2 5zM26 14l4-3v6z" fill="#c8c8c8" stroke="none"/></svg>
              <svg width="34" height="28"><path d="M12 26.500A10.500 10.500 0 1 1 20 26.500" stroke="url(#ring)" stroke-width="2.600"/><path d="M1.500 5.500L5 2 17 13.500 20 20.500 13 17.500zM4.500 5l11 11" fill="#777"/><path d="M27 10l2-4 2.500 5zM28 19l4-3v6z" fill="#c8c8c8" stroke="none"/></svg>
              <svg class="chk" width="24" height="24"><clipPath id="cc"><circle cx="12" cy="12" r="11.500"/></clipPath><path clip-path="url(#cc)" d="M0 -.5h7v5H0zM11.500 0h5.500v5.500h-5.500zM6 5.500h5.500V11H6zM17 5.500h7V11h-7zM0 11h6v5.500H0zM11.500 11H17v5.500h-5.500zM6 16.500h5.500V22H6zM17 16.500h5v5.500h-5zM11.500 20H17v4h-5.500z" fill="#c8c8c8" stroke="none"/></svg>
              <svg width="18" height="20"><path d="M0 1h18M0 10h18M0 19h18"/></svg>
            </div>
            <div class="order"><span class="ol">module order</span><span class="ov">v3.0 JPEG</span><svg class="ic" width="18" height="18"><use href="#reset"/></svg><svg class="ic" width="14" height="16"><use href="#menu"/></svg></div>
          </div>
          <div class="rscroll"></div>
        </div>
      </aside>
    </div>

    <div class="film">
      <div class="t1"><svg width="118" height="56"><rect width="118" height="56" fill="#fff"/><path d="M1 1.500h38M2 5h62M1 9h9M2 14h18M4 18h12M97 9h18M97 14h16M97 18h19M97 32h16M97 35h12M97 39h18M102 48h10M20 54h12" stroke="#aaa" stroke-dasharray="3 2" stroke-width=".8"/><path d="M2 22.500h6M2 25.500h3M2 29h6M2 32h5M2 35.500h5M2 39h6M2 42h8" stroke="#777"/><path d="M4 47h11v3.500H4z" fill="#3478c8"/></svg></div>
      <div class="t2">
        <div class="tt"><span>PNG</span><svg width="22" height="7"><path d="M0 0h22L11 6z" fill="#555"/></svg><svg width="10" height="12" fill="none" stroke="#333"><circle cx="5" cy="6" r="4.500"/><path d="M1 4h3l2 4h3M2 9l6-6"/></svg></div>
        <svg width="118" height="58"><use href="#world"/></svg>
        <div class="tb"><svg width="10" height="12" fill="none" stroke="#333"><circle cx="5" cy="6" r="4.200"/><path d="M3 4l4 4M7 4L3 8"/></svg><div class="stars"><svg width="13" height="13"><use href="#star" fill="#444"/></svg><svg width="13" height="13"><use href="#star" fill="none" stroke="#444" stroke-width="1.800"/></svg><svg width="13" height="13"><use href="#star" fill="none" stroke="#444" stroke-width="1.800"/></svg><svg width="13" height="13"><use href="#star" fill="none" stroke="#444" stroke-width="1.800"/></svg><svg width="13" height="13"><use href="#star" fill="none" stroke="#444" stroke-width="1.800"/></svg></div></div>
      </div>
    </div>
  </div>

  <div class="edge-side"><svg width="15" height="30"><path d="M0 0V30L15 15z" fill="#f0f0f0"/></svg></div>
  <div class="edge-bottom"><svg width="30" height="13"><path d="M0 0H30L15 13z" fill="#f0f0f0"/></svg></div>
</div>
</body>
</html>
```
FILE: styles.css
```css
* { box-sizing: border-box; }
body { margin: 0; width: 1920px; height: 1080px; overflow: hidden; background: #000; padding-top: 31px; font-family: "Open Sans", "Noto Sans", sans-serif; color: #e6e6e6; white-space: nowrap; }
svg { display: block; flex: none; }
.defs { position: absolute; }
.ic { fill: none; stroke: #b2b2b2; stroke-width: 1.5; }

.titlebar { height: 34px; background: #fff; display: flex; align-items: center; padding-left: 2px; color: #111; }
.tname { margin-left: 6px; font-size: 17px; letter-spacing: -.2px; flex: 1; }
.winbtns { margin-right: 11px; }

.app { height: 984px; background: #5c5c5c; display: grid; grid-template-columns: 15px 1890px 15px; grid-template-rows: 15px 956px 13px; }
.edge-top, .edge-bottom { grid-column: 1 / 4; display: flex; justify-content: center; }
.edge-top { align-items: flex-start; padding-top: 2px; }
.edge-side { padding-top: 403px; }

.banner { height: 74px; background: #696969; display: flex; align-items: center; padding-left: 3px; }
.biglogo { margin-top: 7px; }
.brand { margin-left: 9px; flex: 1; color: #acacac; }
.bname { font: 500 38px/46px Roboto, sans-serif; letter-spacing: -.6px; margin-top: 10px; height: 45px; }
.bver { font-size: 14px; line-height: 14px; height: 19px; color: #c4c4c4; letter-spacing: -.4px; margin-top: -3px; }
.modes { display: grid; grid-template-columns: 138px 26px 140px 30px 121px 20px; align-items: center; width: 475px; margin: 3px 19px 0 0; font-size: 25.5px; color: #989898; letter-spacing: -.42px; }
.modes span { position: relative; left: -1px; }
.modes .on { color: #f4f4f4; }
.modes i { width: 2px; height: 27px; background: #999; }

.main { height: 762px; display: grid; grid-template-columns: 372px 1146px 372px; }
.left { display: flex; flex-direction: column; padding-top: 7px; }
.nav { height: 193px; position: relative; }
.fit { position: absolute; right: 0; top: 168px; width: 85px; height: 24px; background: rgba(150,150,150,.4); border-radius: 4px 0 0 0; display: flex; align-items: center; justify-content: flex-end; gap: 12px; padding-right: 8px; font-size: 17px; color: #fff; }
.lpanel { height: 562px; background: #696969; display: flex; }
.lscroll { width: 9px; height: 558px; margin: 2px 0 0 2px; background: #919191; border-radius: 5px; box-shadow: 0 0 0 1px #5c5c5c; }
.mods { flex: 1; margin-left: 2px; }
.mod { height: 48px; border-bottom: 1px solid #727272; display: flex; align-items: center; padding: 0 14px 0 17px; font-size: 19px; letter-spacing: -.18px; color: #c4c4c4; fill: none; stroke: #b0b0b0; stroke-width: 1.5; }
.mod b { border: solid transparent; border-width: 6.5px 0 6.500px 11px; border-left-color: #bdbdbd; }
.mod span { flex: 1; margin-left: 14px; }
.mod svg + svg { margin-left: 9px; }
.dim { stroke: #909090; }

.center { display: flex; flex-direction: column; }
.toolbar { height: 39px; background: #696969; display: grid; grid-template-columns: 44px 48px 164px 242px 126px 77px 86px 32px 107px 210px; align-items: center; font-size: 17.5px; letter-spacing: -.35px; }
.ficon { padding-left: 8px; }
.ftext { padding-left: 3px; }
.rating { display: flex; align-items: center; height: 31px; background: #717171; border-radius: 4px; padding-left: 1px; }
.colors { display: flex; padding-left: 10.5px; fill: none; stroke-width: 1.5; }
.tsearch { height: 33px; background: #717171; border-radius: 5px; padding: 8px 0 0 12px; }
.sortby { padding-left: 11px; }
.combo { height: 29px; background: #727272; display: flex; align-items: center; justify-content: space-between; padding: 0 7px 0 1px; }
.sorticon { padding-left: 1px; }
.count { display: flex; padding-left: 10px; }
.count b { color: #fff; }
.ima { margin-left: 5px; width: 57px; }
.of { margin-right: 5px; }
.tools { display: grid; grid-template-columns: repeat(5, 42px); justify-items: center; align-items: center; }
.canvas { height: 684px; background: #777; padding: 63px 0 0 15px; position: relative; }
.proof { position: absolute; left: 60px; top: 599px; font-size: 26px; letter-spacing: 1.1px; line-height: 36px; font-weight: 700; color: #a6a6a6; -webkit-text-stroke: .8px #666; }
.bottombar { height: 39px; background: #696969; display: flex; align-items: center; }
.bleft { display: flex; align-items: center; gap: 13px; padding-left: 13px; width: 335px; }
.exif { font-size: 19.5px; letter-spacing: -.22px; width: 462px; }
.bright { display: grid; grid-template-columns: repeat(8, 43px); justify-items: center; align-items: center; }
.act { background: #8f8f8f; border-radius: 4px; }

.right { display: flex; flex-direction: column; background: #777; }
.groups { height: 45px; display: grid; grid-template-columns: repeat(6, 56px) 36px; align-items: center; justify-items: center; stroke: #bdbdbd; }
.search { height: 29px; margin: 3px 5px 2px; border: 1px solid #7e7e7e; border-radius: 5px; background: #7a7a7a; display: flex; align-items: center; padding: 0 4px 0 12px; font-size: 17.5px; letter-spacing: -.45px; color: #f2f2f2; }
.search span { margin-left: 5px; }
.search i { width: 1.5px; height: 25px; background: #fff; }
.clr { margin-left: auto; }
.rpanel { height: 503px; background: #696969; display: flex; }
.rstack { width: 359px; display: flex; flex-direction: column; background: #707070; }
.rhead { height: 47px; background: #656565; display: flex; align-items: center; padding: 0 14px 0 13px; gap: 8px; font-size: 19px; letter-spacing: -.28px; color: #c2c2c2; }
.rhead span { flex: 1; margin-left: 3px; }
.tabs { margin: 6px 12px 7px 11px; height: 36px; display: grid; grid-template-columns: 102px 123px 111px; line-height: 36px; text-align: center; font-size: 17.5px; letter-spacing: -.3px; color: #bdbdbd; }
.sel { color: #fff; border-bottom: 2px solid #fff; }
.hov { background: #8a8a8a; color: #e0e0e0; border-bottom: 2px solid #bbb; }
.graph { padding-left: 11px; height: 197px; }
.gtxt { font: 700 32px "Open Sans", sans-serif; fill: #5f5f5f; }
.mix { height: 30px; width: 319px; padding: 8px 0 0 11px; display: flex; justify-content: space-between; align-items: center; font-size: 18px; letter-spacing: -.3px; }
.slider { margin-left: 11px; }
.blend { height: 34px; margin-top: 8px; background: #777; display: grid; grid-template-columns: 54px 54px 55px 57px 53px 49px 35px; align-items: center; justify-items: center; }
.chk { margin-right: 4px; }
.order { flex: 1; background: #696969; display: grid; grid-template-columns: 188px 129px 27px 15px; align-items: center; padding-top: 71px; }
.ol { padding-left: 17px; font-size: 19px; letter-spacing: -.25px; color: #c4c4c4; }
.ov { font-size: 17.5px; letter-spacing: -.2px; color: #eee; }
.rscroll { width: 9px; height: 452px; margin: 1px 0 0 2px; background: #919191; border-radius: 5px; box-shadow: 0 0 0 1px #5c5c5c; }

.film { height: 120px; background: #919191; display: flex; padding-left: 766px; gap: 1px; }
.t1 { width: 118px; height: 119px; background: #a9a9a9; padding-top: 32px; }
.t2 { width: 120px; height: 120px; background: #efefef; border: 1px solid #fff; border-top: 2px solid #555; color: #444; }
.tt { display: flex; height: 29px; font-size: 11.5px; letter-spacing: -.4px; line-height: 14px; }
.tt span { width: 48px; }
.tt svg:last-child { margin-left: 38px; }
.tb { display: flex; align-items: center; padding-top: 16px; }
.stars { display: flex; margin-left: 15px; }
```
